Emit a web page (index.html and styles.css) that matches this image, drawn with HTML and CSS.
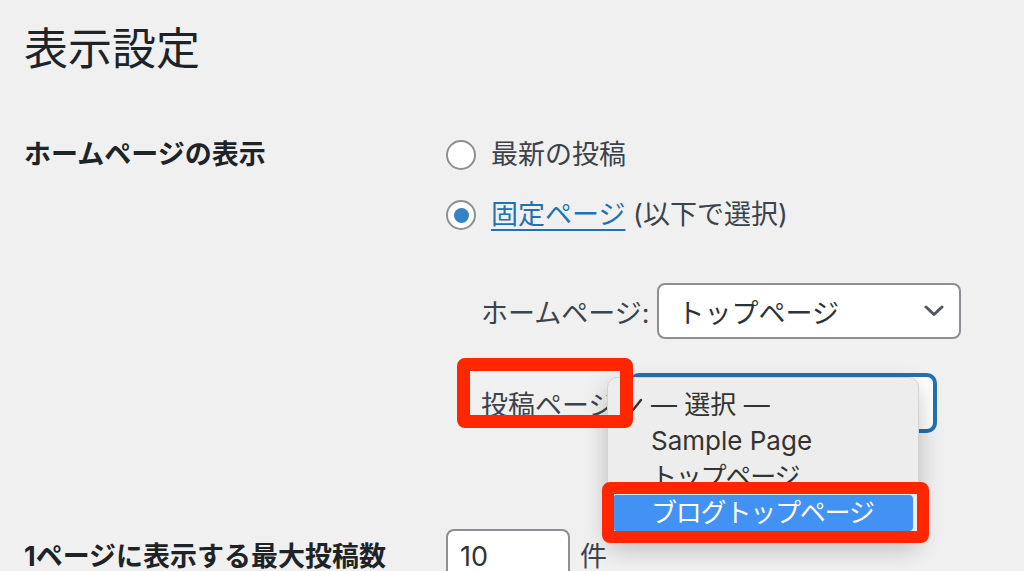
FILE: index.html
```html
<!DOCTYPE html>
<html lang="ja">
<head>
<meta charset="utf-8">
<title>表示設定</title>
<link rel="stylesheet" href="styles.css">
</head>
<body>
<div class="wrap">
  <h1 class="page-title">表示設定</h1>

  <div class="form-row row-front">
    <div class="th">ホームページの表示</div>
    <div class="td">
      <label class="radio-line"><span class="radio"></span><span class="radio-text">最新の投稿</span></label>
      <label class="radio-line"><span class="radio checked"></span><span class="radio-text"><a class="link" href="#">固定ページ</a> (以下で選択)</span></label>

      <div class="page-selects">
        <div class="select-line">
          <span class="sel-label">ホームページ:</span>
          <div class="select">
            <span class="select-value">トップページ</span>
            <svg class="chevron" width="20" height="12" viewBox="0 0 20 12"><polyline points="2,2 10,9.5 18,2" fill="none" stroke="#50575e" stroke-width="3" stroke-linecap="round" stroke-linejoin="round"/></svg>
          </div>
        </div>
        <div class="select-line second">
          <span class="sel-label">投稿ページ:</span>
          <div class="select focused"></div>

          <div class="menu">
            <div class="menu-item">
              <svg class="check" width="16" height="14" viewBox="0 0 16 14"><polyline points="2,8 6,12 14,2" fill="none" stroke="#333" stroke-width="2.4" stroke-linecap="round" stroke-linejoin="round"/></svg>
              — 選択 —
            </div>
            <div class="menu-item">Sample Page</div>
            <div class="menu-item kana">トップページ</div>
            <div class="menu-item kana active">ブログトップページ</div>
          </div>

          <div class="annot annot-label"></div>
          <div class="annot annot-item"></div>
        </div>
      </div>
    </div>
  </div>

  <div class="form-row row-count">
    <div class="th">1ページに表示する最大投稿数</div>
    <div class="td count-cell">
      <div class="num-input">10</div>
      <span class="unit">件</span>
    </div>
  </div>
</div>
</body>
</html>
```

FILE: styles.css
```css
html, body {
  margin: 0;
  padding: 0;
}
body {
  background: #f0f0f1;
  font-family: Inter, "Noto Sans CJK JP", sans-serif;
  color: #3c434a;
  width: 1024px;
  height: 571px;
  overflow: hidden;
}
.wrap {
  padding-left: 24px;
}
.page-title {
  margin: 0;
  padding-top: 21px;
  font-size: 44px;
  font-weight: 400;
  line-height: 56px;
  color: #1d2327;
}
.form-row {
  display: flex;
}
.row-front {
  margin-top: 48px;
}
.th {
  width: 422px;
  flex: none;
  font-size: 27px;
  font-weight: 700;
  line-height: 60px;
  color: #1d2327;
}
.td {
  font-size: 27px;
}
.radio-line {
  display: flex;
  align-items: center;
  height: 60px;
}
.radio {
  width: 30px;
  height: 30px;
  box-sizing: border-box;
  border: 2px solid #8c8f94;
  border-radius: 50%;
  background: #fff;
  display: flex;
  align-items: center;
  justify-content: center;
  margin-right: 15px;
}
.radio.checked::after {
  content: "";
  width: 15px;
  height: 15px;
  border-radius: 50%;
  background: #3582c4;
}
.radio-text {
  line-height: 60px;
}
.link {
  color: #2271b1;
  text-decoration: underline;
  text-decoration-thickness: 2px;
  text-underline-offset: 5px;
}
.page-selects {
  margin-top: 38px;
  padding-left: 35px;
}
.select-line {
  display: flex;
  align-items: center;
  height: 56px;
}
.select-line.second {
  margin-top: 36px;
  position: relative;
}
.sel-label {
  margin-right: 8px;
}
.select {
  width: 304px;
  height: 56px;
  box-sizing: border-box;
  border: 2px solid #8c8f94;
  border-radius: 8px;
  background: #fff;
  display: flex;
  align-items: center;
  justify-content: space-between;
  padding: 0 15px 0 18px;
  color: #2c3338;
}
.select.focused {
  border-color: #2271b1;
  box-shadow: 0 0 0 2px #2271b1;
}
.menu {
  position: absolute;
  left: 126px;
  top: 2px;
  width: 312px;
  height: 162px;
  box-sizing: border-box;
  padding: 9px 5px;
  background: #ededed;
  border: 1px solid #d2d2d2;
  border-radius: 10px;
  box-shadow: 0 10px 24px rgba(0, 0, 0, 0.22);
  z-index: 2;
  font-size: 26px;
}
.menu-item {
  position: relative;
  height: 36px;
  line-height: 36px;
  padding-left: 38px;
  color: #333;
  white-space: nowrap;
}
.menu-item.kana {
  letter-spacing: -1.2px;
}
.menu-item.active {
  background: #4192f2;
  color: #fff;
  border-radius: 4px;
}
.check {
  position: absolute;
  left: 14px;
  top: 11px;
}
.annot {
  position: absolute;
  box-sizing: border-box;
  border: 13px solid #ff2600;
  border-radius: 8px;
  z-index: 3;
}
.annot-label {
  left: -24px;
  top: -17px;
  width: 176px;
  height: 70px;
}
.annot-item {
  left: 121px;
  top: 107px;
  width: 327px;
  height: 61px;
  border-width: 12px;
}
.row-count {
  margin-top: 98px;
}
.row-count .th {
  line-height: 56px;
}
.count-cell {
  display: flex;
  align-items: flex-start;
}
.num-input {
  width: 124px;
  height: 56px;
  box-sizing: border-box;
  border: 2px solid #8c8f94;
  border-radius: 8px;
  background: #fff;
  padding-left: 12px;
  line-height: 52px;
  color: #2c3338;
}
.unit {
  margin-left: 10px;
  line-height: 56px;
}
```
